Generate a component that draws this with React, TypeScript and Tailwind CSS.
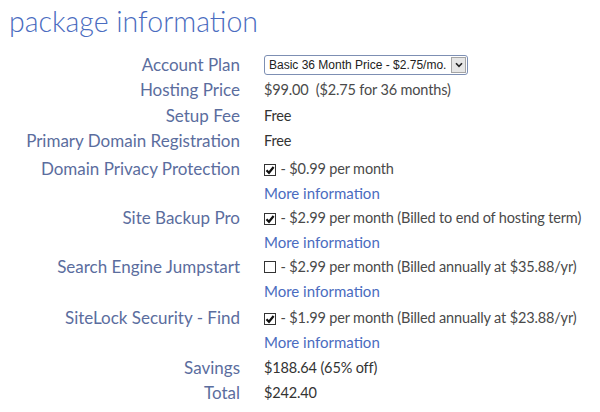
import React from 'react'

// Package information summary

const labelCls = 'text-right text-[17px] text-[#5b6d9e] leading-[25.25px] whitespace-nowrap'
const valueCls = 'text-[14.5px] text-[#4a4a4a] leading-[25.25px] whitespace-nowrap tracking-[-0.15px]'
const linkCls = 'text-[15px] text-[#4a6cc0] leading-[25.25px] whitespace-nowrap'

function Check({ checked }: { checked: boolean }) {
  return (
    <span className="inline-flex items-center justify-center w-[12px] h-[12px] border border-[#333] bg-white align-[-1px] mr-[1px]">
      {checked && (
        <svg width="10" height="10" viewBox="0 0 10 10">
          <path d="M1.5 5.2 L4 7.8 L8.6 2" fill="none" stroke="#111" strokeWidth="2.2" />
        </svg>
      )}
    </span>
  )
}

type Row = { label: string; value: React.ReactNode; more?: boolean; shift?: string }

const rows: Row[] = [
  { label: 'Hosting Price', value: <span>$99.00&nbsp; ($2.75 for 36 months)</span> },
  { label: 'Setup Fee', value: <span className="text-[#333]">Free</span> },
  { label: 'Primary Domain Registration', value: <span className="text-[#333]">Free</span> },
  {
    label: 'Domain Privacy Protection',
    value: (
      <span>
        <Check checked /> - $0.99 per month
      </span>
    ),
    more: true,
    shift: 'mt-[3px]'
  },
  {
    label: 'Site Backup Pro',
    value: (
      <span>
        <Check checked /> - $2.99 per month (Billed to end of hosting term)
      </span>
    ),
    more: true,
    shift: 'mt-[-2px]'
  },
  {
    label: 'Search Engine Jumpstart',
    value: (
      <span>
        <Check checked={false} /> - $2.99 per month (Billed annually at $35.88/yr)
      </span>
    ),
    more: true,
    shift: 'mt-[-1px]'
  },
  {
    label: 'SiteLock Security - Find',
    value: (
      <span>
        <Check checked /> - $1.99 per month (Billed annually at $23.88/yr)
      </span>
    ),
    more: true
  },
  { label: 'Savings', value: <span className="text-[#333]">$188.64 (65% off)</span> },
  { label: 'Total', value: <span className="text-[#333]">$242.40</span> }
]

export default function App() {
  return (
    <div className="w-[600px] h-[412px] bg-white overflow-hidden" style={{ fontFamily: 'Lato, "Open Sans", sans-serif' }}>
      <h1 className="pl-[9px] pt-[1px] text-[28.5px] font-light leading-[40px] text-[#4a6cc0]">package information</h1>

      <div className="grid grid-cols-[240px_1fr] gap-x-[24px] mt-[11px]">
        <div className={labelCls}>Account Plan</div>
        <div className="h-[25.25px] flex items-center">
          <div className="flex items-center h-[20px] w-[204px] border border-[#7d8fb3] rounded-[3px] bg-white pl-[4px] pr-[1px]">
            <span
              className="flex-1 text-[12px] text-[#222] whitespace-nowrap overflow-hidden"
              style={{ fontFamily: '"Liberation Sans", Arial, sans-serif' }}
            >
              Basic 36 Month Price - $2.75/mo.
            </span>
            <span className="w-[15px] h-[16px] border border-[#a5a5a5] bg-[#e6e6e6] flex items-center justify-center">
              <svg width="8" height="6" viewBox="0 0 8 6">
                <path d="M1 1.2 L4 4.4 L7 1.2" fill="none" stroke="#222" strokeWidth="1.6" />
              </svg>
            </span>
          </div>
        </div>

        {rows.map((r) => (
          <React.Fragment key={r.label}>
            <div className={`${labelCls} ${r.shift ?? ''}`}>{r.label}</div>
            <div className={`${valueCls} ${r.shift ?? ''}`}>{r.value}</div>
            {r.more && (
              <>
                <div />
                <div className={linkCls}>More information</div>
              </>
            )}
          </React.Fragment>
        ))}
      </div>
    </div>
  )
}
